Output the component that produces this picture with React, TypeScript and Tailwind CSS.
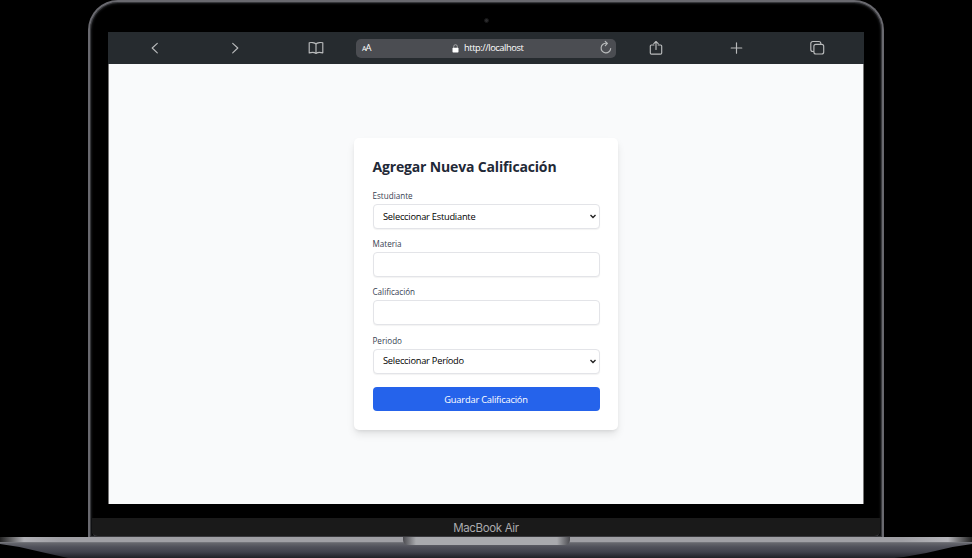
import React from "react";

const font = "font-['Open_Sans','Noto_Sans',sans-serif]";

function Icon({ children, w = 16, className = "" }: { children: React.ReactNode; w?: number; className?: string }) {
  return (
    <svg
      width={w}
      height={16}
      viewBox={`0 0 ${w} 16`}
      fill="none"
      stroke="#b9bbbc"
      strokeWidth="1.15"
      strokeLinecap="round"
      strokeLinejoin="round"
      className={`shrink-0 ${className}`}
    >
      {children}
    </svg>
  );
}

function Toolbar() {
  return (
    <div className="flex h-8 shrink-0 items-center bg-[#262b2f]">
      <Icon className="ml-[39px]"><path d="M10.300 3.300 5.200 8l5.100 4.900" /></Icon>
      <Icon className="ml-16"><path d="M5.700 3.300 10.800 8l-5.100 4.900" /></Icon>
      <Icon className="ml-[65px]">
        <path d="M8 4v9.2M8 4C6.7 2.5 3 2.2 1.2 2.8v10.1c2.2-.7 5.5-.5 6.8.6 1.3-1.1 4.6-1.3 6.8-.6V2.8C13 2.2 9.300 2.500 8 4Z" />
      </Icon>
      <div className="ml-8 flex h-[19px] w-[260px] items-center rounded-[5px] bg-[#4b4d52] text-white">
        <div className={`ml-[6px] flex w-4 items-baseline leading-none ${font}`}>
          <span className="text-[7px]">A</span>
          <span className="-ml-px text-[9.5px]">A</span>
        </div>
        <svg width="7" height="9" viewBox="0 0 7 9" className="ml-[74px]">
          <path d="M1.700 4V2.500a1.800 1.800 0 0 1 3.600 0V4" fill="none" stroke="#b5b6b8" strokeWidth="0.8" />
          <rect x="0.500" y="3.700" width="6" height="4.800" rx="0.700" fill="#fff" />
        </svg>
        <span className={`ml-[5px] w-[119px] whitespace-nowrap text-[9.300px] leading-none tracking-[-0.430px] ${font}`}>http://localhost</span>
        <Icon className="ml-[15px]">
          <path d="M12.700 8.500a4.800 4.800 0 1 1-4.200-5.200M7.200 1.300l2.200 2.100-2.100 2.200" />
        </Icon>
      </div>
      <Icon className="ml-8">
        <path d="M5.900 5H3.400c-.8 0-1.100.4-1.100 1.100v6.800c0 .8.400 1.200 1.200 1.200h9c.8 0 1.200-.4 1.200-1.200V6.100c0-.8-.4-1.100-1.100-1.100h-2.500M8 9.500V1.600M5.800 3.700 8 1.500l2.200 2.200" />
      </Icon>
      <Icon className="ml-16"><path d="M8.500 2.800v10.400M3.200 8h10.600" /></Icon>
      <Icon className="ml-[65px]">
        <rect x="4.900" y="4.300" width="9.800" height="9.700" rx="2" />
        <path d="M4.500 11.500H3.800a2 2 0 0 1-2-2v-6a2 2 0 0 1 2-2h6a2 2 0 0 1 2 2v.4" />
      </Icon>
    </div>
  );
}

function Field({ label, value }: { label: string; value?: string }) {
  return (
    <label className="flex h-[48.200px] flex-col">
      <span className="h-[14px] text-[8.100px] font-medium leading-[12px] text-[#374151]">{label}</span>
      <span className="flex h-[25px] items-center justify-between rounded-[4px] border border-[#e3e4e8] bg-white pl-[9.500px] pr-[3px] text-[9.300px] tracking-[-0.250px] text-black shadow-[0_1px_1px_rgba(0,0,0,0.05)]">
        {value}
        {value && (
          <svg width="6" height="5" viewBox="0 0 6 5" fill="none" stroke="#222" strokeWidth="1.400">
            <path d="M.5 1 3 3.500 5.500 1" />
          </svg>
        )}
      </span>
    </label>
  );
}

export default function App() {
  return (
    <div className="flex h-[558px] w-[972px] flex-col items-center overflow-hidden bg-black">
      <div className="flex h-[537px] w-[796px] shrink-0 flex-col rounded-t-[30px] border-2 border-b-0 border-[#69696f] bg-black shadow-[inset_0_0_0_1px_#37383b,inset_0_0_2px_2px_#17181a]">
        <div className="flex h-[30px] shrink-0 items-center justify-center pt-[16px]">
          <div className="mb-[10px] h-[5px] w-[5px] rounded-full border border-[#161616] bg-[#2a2a2c]" />
        </div>
        <div className="ml-[18px] flex h-[472px] w-[756px] shrink-0 flex-col bg-[#f9fafb] shadow-[inset_1px_0_#777,inset_-1px_0_#777]">
          <Toolbar />
          <main className={`flex flex-1 items-center justify-center ${font}`}>
            <form className="flex h-[292px] w-[264px] flex-col rounded-[5px] bg-white pl-[18.500px] pr-[18.500px] pt-[19px] shadow-[0_5px_9px_-1px_rgba(0,0,0,0.10),0_2px_4px_-2px_rgba(0,0,0,0.12)]">
              <h1 className="mb-[13px] h-[20px] whitespace-nowrap text-[14px] font-bold leading-[20px] tracking-[-0.160px] text-[#1f2937]">Agregar Nueva Calificación</h1>
              <Field label="Estudiante" value="Seleccionar Estudiante" />
              <Field label="Materia" />
              <Field label="Calificación" />
              <Field label="Periodo" value="Seleccionar Período" />
              <button type="button" className="mt-[4px] h-[24px] shrink-0 rounded-[4px] bg-[#2563eb] pt-[2px] text-[9.300px] tracking-[-0.200px] text-white">
                Guardar Calificación
              </button>
            </form>
          </main>
        </div>
        <div className="mx-[2px] mt-[14px] flex h-[19px] shrink-0 items-center justify-center rounded-b-[6px] border-b border-[#38383c] bg-[#1a1a1a] pt-[3px] font-['Inter','Liberation_Sans',sans-serif] text-[11.500px] leading-none tracking-[-0.350px] text-[#aaaaad]">
          MacBook Air
        </div>
      </div>
      <div className="h-[21px] w-[972px] shrink-0 bg-[linear-gradient(to_bottom,#66676d_6px,#50515a_10px,#41424c_15px,#202127)] [clip-path:polygon(0_0,100%_0,100%_7px,98%_10px,95.300%_16px,93%_20px,92%_21px,7%_21px,4.700%_16px,2%_10px,0_7px)]">
        <div className="flex h-[6px] justify-center border-b border-[#73747a] bg-[linear-gradient(to_right,#222_0,#b0b0b5_24px,#a0a0a5_60px,#a0a0a5_902px,#b5b5ba_948px,#222_972px)]">
          <div className="h-[8px] w-[167px] shrink-0 rounded-b-[5px] bg-[linear-gradient(to_right,#4b4b50_0,#a9aaae_13px,#a9aaae_154px,#4b4b50_167px)]" />
        </div>
      </div>
    </div>
  );
}
